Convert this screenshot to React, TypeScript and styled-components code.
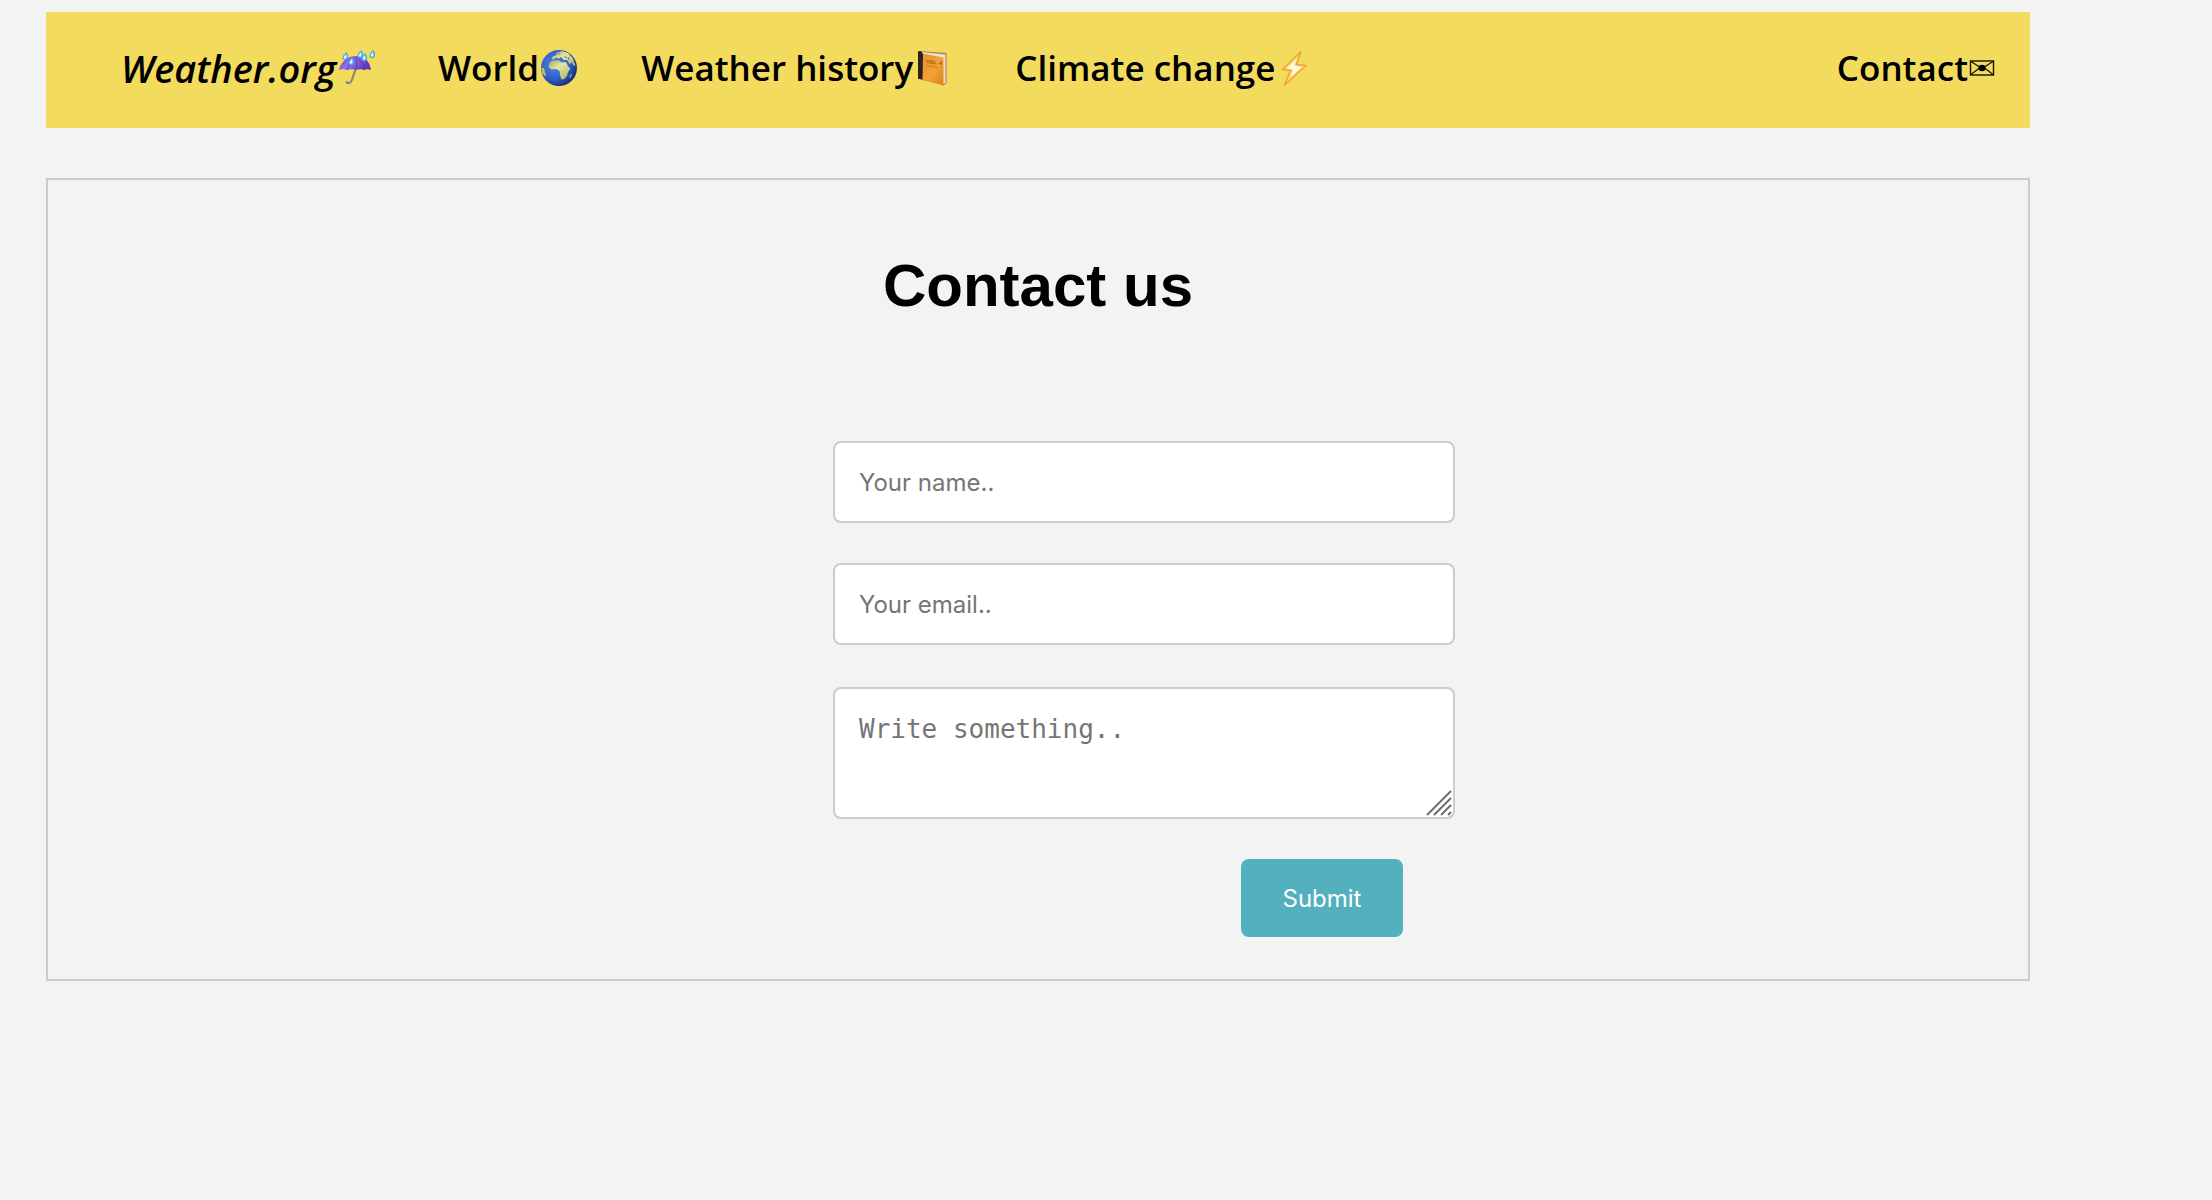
import React from "react";
import styled, { createGlobalStyle } from "styled-components";

const GlobalStyle = createGlobalStyle`
  *, *::before, *::after { box-sizing: border-box; }
  body {
    margin: 0;
    background: #f1f4f3;
    color: #000;
    font-family: "Liberation Sans", Arial, sans-serif;
  }
`;

const Page = styled.div`
  padding: 12px 182px 40px 46px;
`;

const NavBar = styled.nav`
  display: flex;
  align-items: center;
  justify-content: space-between;
  min-height: 116px;
  padding: 0 34px 4px 75px;
  background: #f3db5d;
`;

const NavList = styled.ul`
  display: flex;
  align-items: center;
  gap: 62px;
  margin: 0;
  padding: 0;
  list-style: none;
`;

const NavLink = styled.a<{ $brand?: boolean }>`
  display: flex;
  align-items: center;
  color: #000;
  font-family: "Trebuchet MS", "Open Sans", sans-serif;
  font-size: ${(p) => (p.$brand ? "38px" : "35px")};
  font-weight: 600;
  font-style: ${(p) => (p.$brand ? "italic" : "normal")};
  line-height: 44px;
  text-decoration: none;
  white-space: nowrap;
`;

const Emoji = styled.svg`
  display: block;
  flex: none;
  width: 40px;
  height: 40px;
`;

const Envelope = styled.svg`
  display: block;
  flex: none;
  width: 28px;
  height: 16px;
`;

const Card = styled.main`
  margin-top: 50px;
  padding: 74px 0 42px;
  border: 2px solid #ccc;
`;

const Title = styled.h1`
  margin: 0;
  font-size: 60px;
  font-weight: 700;
  line-height: 64px;
  text-align: center;
`;

const FormGrid = styled.div`
  display: grid;
  grid-template-columns: 785fr 622fr 573fr;
  margin-top: 123px;
`;

const Form = styled.form`
  grid-column: 2;
  display: flex;
  flex-direction: column;
  gap: 40px;
`;

const Label = styled.label`
  position: relative;
  display: block;
`;

const MessageLabel = styled(Label)`
  margin-top: 2px;
`;

const Input = styled.input`
  display: block;
  width: 100%;
  height: 82px;
  padding: 0 24px;
  border: 2px solid #ccc;
  border-radius: 8px;
  background: #fff;
  font-family: Inter, sans-serif;
  font-size: 24px;
  &::placeholder { color: #757575; opacity: 1; }
`;

const TextArea = styled.textarea`
  display: block;
  width: 100%;
  height: 132px;
  padding: 24px;
  border: 2px solid #ccc;
  border-radius: 8px;
  background: #fff;
  font-family: "DejaVu Sans Mono", monospace;
  font-size: 26px;
  line-height: 32px;
  resize: vertical;
  &::placeholder { color: #757575; opacity: 1; }
  &::-webkit-resizer { display: none; }
`;

const Grip = styled.svg`
  position: absolute;
  right: 3px;
  bottom: 3px;
  width: 26px;
  height: 26px;
  pointer-events: none;
`;

const Submit = styled.button`
  align-self: flex-end;
  min-width: 162px;
  height: 78px;
  margin-right: 52px;
  padding: 0 40px;
  border: 0;
  border-radius: 8px;
  background: #52b0bf;
  color: #fff;
  font-family: Inter, sans-serif;
  font-size: 24px;
  cursor: pointer;
`;

const drops: [number, number][] = [[9, 8], [15, 13], [24, 6], [28, 9], [36, 6]];

const Umbrella = () => (
  <Emoji viewBox="0 0 40 40" aria-hidden="true">
    <defs>
      <linearGradient id="canopy" x1="0" y1="0" x2="1" y2="0.4">
        <stop offset="0" stopColor="#5a3aae" />
        <stop offset="0.45" stopColor="#9a6cec" />
        <stop offset="1" stopColor="#5a3ab8" />
      </linearGradient>
    </defs>
    <path d="M20 20 L15.500 33 Q13 37 10.500 34" fill="none" stroke="#85807c" strokeWidth="2" strokeLinecap="round" />
    <path d="M2.500 22 Q8 8 19 8 Q33 8 35 22 Q31 20.500 28 22 Q24 20.500 20 22 Q15 20.500 11 22 Q7 20.500 2.500 22Z" fill="url(#canopy)" />
    <path d="M20 22 Q22 14 19 9 M11 22 Q13 14 18 9 M28 22 Q29 15 20 9" fill="none" stroke="#4b2b9d" strokeWidth="0.600" />
    {drops.map(([x, y]) => (
      <g key={x} transform={`translate(${x} ${y})`}>
        <path d="M1.500 -4 Q4 1 2.500 3 Q0 5.500 -2.300 3 Q-3.500 0 1.500 -4Z" fill="#4aa6e2" />
        <path d="M0.800 -2 Q2.400 1 1 2.600 Q-1.500 3.400 -1.400 1 Z" fill="#d8f6ff" />
      </g>
    ))}
  </Emoji>
);

const Globe = () => (
  <Emoji viewBox="0 0 40 40" aria-hidden="true">
    <defs>
      <radialGradient id="sea" cx="0.38" cy="0.4" r="0.65">
        <stop offset="0" stopColor="#4c86e8" />
        <stop offset="0.65" stopColor="#2f5bc6" />
        <stop offset="1" stopColor="#1b2c77" />
      </radialGradient>
      <linearGradient id="land" x1="0" y1="0" x2="1" y2="1">
        <stop offset="0" stopColor="#a3a865" />
        <stop offset="0.4" stopColor="#e9e39c" />
        <stop offset="1" stopColor="#9fb56a" />
      </linearGradient>
    </defs>
    <circle cx="20" cy="20" r="18" fill="url(#sea)" />
    <path d="M10 17 Q10 13 15 12.500 L20 12.500 L23 14.500 L27 14 L29 18 L31.500 20.500 L29 24 L28 28 L25 31 L22.500 31.500 L21 27 L20.500 23 L17 21 L12.500 21.500 L9.500 19Z" fill="url(#land)" />
    <path d="M13 11 L14 8 L17 7.500 L17.500 5 L23 3 L29 5 L34 10.500 L36.500 18 L34.500 17.500 L32.500 14 L31 16.500 L28 12 L24.500 12 L22 9 L20 10.500 L17 9.500 L14.500 11.500Z" fill="url(#land)" />
    <path d="M30.500 29 L32.500 25 L32.500 28 L31 30Z M2.500 20 L5 20 L6 24 L7 27 L5.500 28 L3 25Z" fill="#c3bd53" />
    <path d="M19 7 L21 5 M26 8 L27 10 M29 9 L30 12" fill="none" stroke="#5a77bd" strokeWidth="1" />
  </Emoji>
);

const Book = () => (
  <Emoji viewBox="0 0 40 40" aria-hidden="true">
    <defs>
      <linearGradient id="cover" x1="0" y1="0" x2="1" y2="1">
        <stop offset="0" stopColor="#e8922c" />
        <stop offset="0.55" stopColor="#f3a234" />
        <stop offset="1" stopColor="#d97d20" />
      </linearGradient>
    </defs>
    <path d="M5 3 L33.500 5 L33.500 35 L31 37 L5 31Z" fill="#c4742c" />
    <path d="M8.500 4 L32.500 6.500 L32.500 35 L30 36 L10 8Z" fill="#dfe3e8" />
    <path d="M9.500 5.500 L30.500 9.500 L30.500 37.500 L9 31.500Z" fill="url(#cover)" />
    <path d="M5 3.500 L8 3 L10 6 L9.500 31.500 L5 30.500Z" fill="#2b211d" />
    <text x="13" y="15" transform="rotate(7 13 15)" fontFamily="Liberation Sans, sans-serif" fontSize="5" fill="#9c5118">VOL. 4</text>
    <path d="M13 17.500 L25 19.500" stroke="#ca7a27" strokeWidth="1" />
  </Emoji>
);

const Bolt = () => (
  <Emoji viewBox="0 0 40 40" aria-hidden="true">
    <path d="M26 3.500 L7.500 21.500 L15.500 22.500 L9.500 37 L31 17.500 L21.500 16.500Z" fill="#fbdc70" stroke="#f0a23a" strokeWidth="1.600" strokeLinejoin="round" />
    <path d="M22 10 L12 20.500 L18.500 21.500 L15 29.500 L27 19 L18.500 17.500Z" fill="#fffbe0" />
  </Emoji>
);

const Mail = () => (
  <Envelope viewBox="0 0 28 16" aria-hidden="true">
    <rect x="2.500" y="1" width="23" height="14" fill="none" stroke="#15120a" strokeWidth="1.400" />
    <path d="M3 1.500 L14 8.500 L25 1.500 M3 14.500 L11.500 8 M25 14.500 L16.500 8" fill="none" stroke="#15120a" strokeWidth="1.200" />
    <ellipse cx="14" cy="8" rx="3.600" ry="3.200" fill="#000" />
  </Envelope>
);

const links = [
  { text: "Weather.org", icon: <Umbrella />, brand: true },
  { text: "World", icon: <Globe /> },
  { text: "Weather history", icon: <Book /> },
  { text: "Climate change", icon: <Bolt /> },
];

export default function App() {
  return (
    <>
      <GlobalStyle />
      <Page>
        <NavBar>
          <NavList>
            {links.map((l) => (
              <li key={l.text}>
                <NavLink href="#" $brand={l.brand}>
                  {l.text}
                  {l.icon}
                </NavLink>
              </li>
            ))}
          </NavList>
          <NavLink href="#">
            Contact
            <Mail />
          </NavLink>
        </NavBar>
        <Card>
          <Title>Contact us</Title>
          <FormGrid>
            <Form onSubmit={(e) => e.preventDefault()}>
              <Label>
                <Input type="text" name="name" aria-label="Your name" placeholder="Your name.." />
              </Label>
              <Label>
                <Input type="email" name="email" aria-label="Your email" placeholder="Your email.." />
              </Label>
              <MessageLabel>
                <TextArea name="message" aria-label="Message" placeholder="Write something.." />
                <Grip viewBox="0 0 26 26" aria-hidden="true">
                  <path d="M1 25 L25 1 M8 25 L25 8 M15 25 L25 15 M22 25 L25 22" stroke="#6e6e6e" strokeWidth="2" />
                </Grip>
              </MessageLabel>
              <Submit type="submit">Submit</Submit>
            </Form>
          </FormGrid>
        </Card>
      </Page>
    </>
  );
}
